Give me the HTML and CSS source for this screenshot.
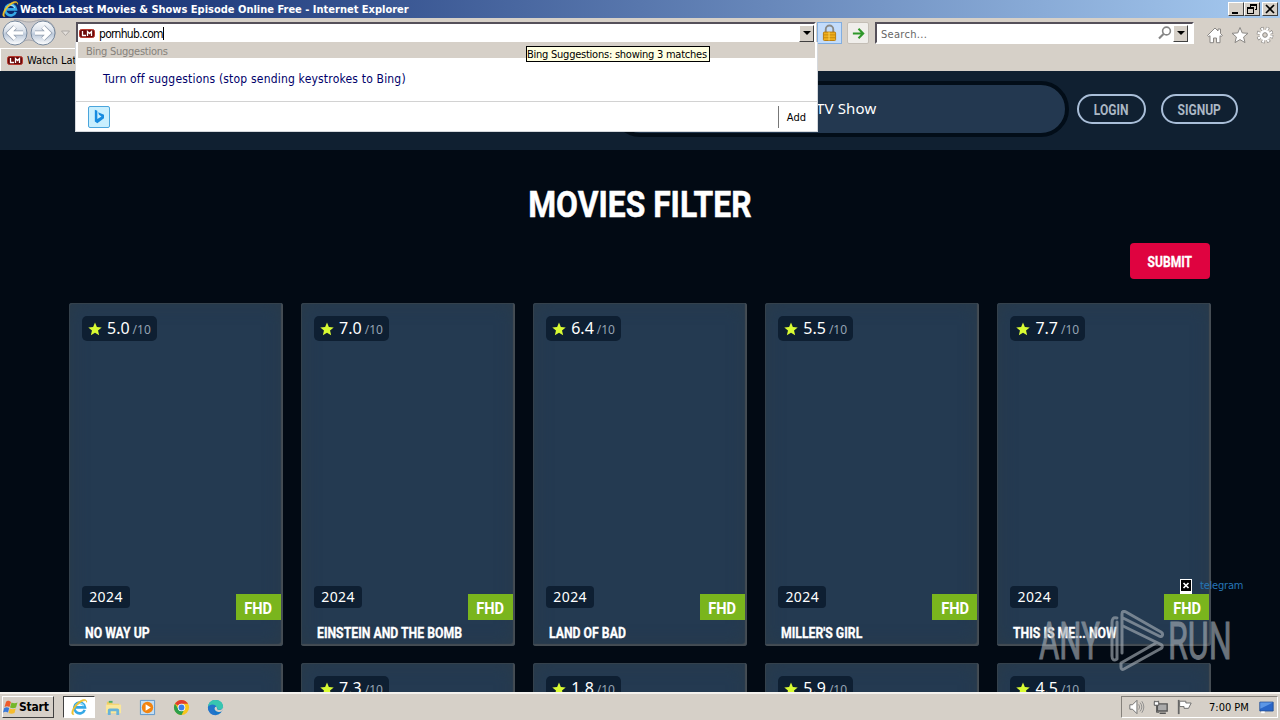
FILE: index.html
```html
<!DOCTYPE html>
<html lang="en">
<head>
  <meta charset="utf-8">
  <title>Watch Latest Movies &amp; Shows Episode Online Free</title>
  <link rel="stylesheet" href="styles.css">
</head>
<body>

  <svg class="symbols" aria-hidden="true">
    <symbol id="star" viewBox="0 0 24 24"><path d="M12 1l3.200 7.600 8.300.7-6.300 5.400 1.900 8.100L12 18.500l-7.100 4.300 1.900-8.100L.5 9.300l8.300-.7z"/></symbol>
    <symbol id="ie" viewBox="0 0 18 18">
      <path d="M14.500 11.500A5.700 5.700 0 1 1 14.800 8.800H5" fill="none" stroke="#35a8e6" stroke-width="2.800"/>
      <path d="M4.500 7.500C6 4 12 3 13.500 7.500" fill="none" stroke="#9ce2fd" stroke-width="1.200"/>
      <path d="M3 16.500C-1 17 1 10 6 5S17-1 16.500 3.500C17 0 11 2 7 6S1 15 3 16.500z" fill="#f7c92c" stroke="#e6b929" stroke-width=".7"/>
    </symbol>
    <symbol id="lm" viewBox="0 0 16 9">
      <rect x=".5" y=".5" width="15" height="8" rx="2" fill="#6c0909" stroke="#b8382d"/>
      <path d="M3.500 2v4.500H7M8.500 7V2.500l2 2 2-2V7" fill="none" stroke="#fff" stroke-width="1.300"/>
    </symbol>
  </svg>

  <div class="title-bar">
    <svg class="ie-logo"><use href="#ie"/></svg>
    <span class="window-title">Watch Latest Movies &amp; Shows Episode Online Free - Internet Explorer</span>
    <div class="window-buttons">
      <span class="win-btn"><svg viewBox="0 0 12 12"><path d="M2 9h6v2H2z"/></svg></span>
      <span class="win-btn"><svg viewBox="0 0 12 12"><path d="M4 1h7v6H9V6h1V3H5v1H4zM1 4h7v7H1zm1 2v4h5V6z" fill-rule="evenodd"/></svg></span>
      <span class="win-btn close"><svg viewBox="0 0 12 12"><path d="M2 2l8 8M10 2l-8 8" stroke="#000" stroke-width="1.700"/></svg></span>
    </div>
  </div>

  <div class="toolbar">
    <div class="nav-buttons">
      <svg class="nav-svg" viewBox="0 0 72 28">
        <defs>
          <linearGradient id="round" x1="0" y1="0" x2="0" y2="1">
            <stop offset="0" stop-color="#fff"/><stop offset=".45" stop-color="#d5dde8"/>
            <stop offset=".55" stop-color="#bcc9da"/><stop offset="1" stop-color="#fff"/>
          </linearGradient>
        </defs>
        <path d="M14 1C21 0 22 3 29 3S37 0 44 1s12 7 11 14-7 11-13 10c-6 0-7-4-13-4s-7 4-15 4" fill="#cbc9cb" stroke="#a9a8ab"/>
        <circle cx="15" cy="14" r="12" fill="url(#round)" stroke="#77899e"/>
        <circle cx="43" cy="14" r="12" fill="url(#round)" stroke="#77899e"/>
        <path d="M23 14H9m6-6l-6 6 6 6M35 14h14m-6-6l6 6-6 6" fill="none" stroke="#929eae" stroke-width="5"/>
        <path d="M23 14H9m6-6l-6 6 6 6M35 14h14m-6-6l6 6-6 6" fill="none" stroke="#fff" stroke-width="3.500"/>
        <path d="M61.500 12h8L65.500 16.500z" fill="#e4e0dc" stroke="#aca8a4"/>
      </svg>
    </div>
    <div class="address-bar">
      <svg class="favicon"><use href="#lm"/></svg>
      <span class="address">pornhub.com</span><span class="caret"></span>
      <span class="drop-btn"></span>
    </div>
    <div class="tool-btn lock">
      <svg viewBox="0 0 16 18"><path d="M4 9V5a4 4 0 0 1 8 0v4" fill="none" stroke="#8a8a86" stroke-width="2"/><rect x="1.500" y="8" width="13" height="9" rx="1" fill="#efae1d" stroke="#b77a0b"/><path d="M2 11h12M2 14h12" stroke="#c98c0d"/><path d="M7.500 8v9" stroke="#fbd863"/></svg>
    </div>
    <div class="tool-btn go">
      <svg viewBox="0 0 16 16"><path d="M2 8h11M8 3l5 5-5 5" fill="none" stroke="#2f972b" stroke-width="2.200"/></svg>
    </div>
    <div class="search-bar">
      <span class="search-text">Search...</span>
      <svg class="magnifier" viewBox="0 0 14 14"><circle cx="8.500" cy="5" r="3.900" fill="none" stroke="#858585" stroke-width="1.600"/><path d="M5.500 8L1 12.500" stroke="#858585" stroke-width="2.200"/></svg>
      <span class="drop-btn"></span>
    </div>
    <div class="command-icons">
      <svg viewBox="0 0 18 18"><path d="M1.500 9.500L9 2l3 3V3h2.500v4.500l2 2-1.500 1-1-.8v7H10.500V12h-3v4.700H4v-7l-1.200.9z" fill="#fff" stroke="#8a8784"/></svg>
      <svg viewBox="0 0 18 18"><path d="M9 1.500l2.200 5.400 5.800.4-4.400 3.700 1.400 5.600-5-3-5 3 1.400-5.600L1 7.300l5.800-.4z" fill="#fff" stroke="#8a8784"/></svg>
      <svg viewBox="0 0 18 18"><circle cx="9" cy="9" r="6.400" fill="none" stroke="#8a8784" stroke-width="4" stroke-dasharray="3 2.030"/><circle cx="9" cy="9" r="6.400" fill="none" stroke="#fff" stroke-width="2.800" stroke-dasharray="2 3.030" stroke-dashoffset="-.5"/><circle cx="9" cy="9" r="5.300" fill="#fff"/><circle cx="9" cy="9" r="2.300" fill="#d6d0c8" stroke="#8a8784"/></svg>
    </div>
  </div>

  <div class="tab-row">
    <div class="tab"><svg class="favicon"><use href="#lm"/></svg><span class="tab-title">Watch Lat</span></div>
  </div>

  <div class="suggestions">
    <div class="suggest-head"><span>Bing Suggestions</span></div>
    <div class="suggest-body"><span>Turn off suggestions (stop sending keystrokes to Bing)</span></div>
    <div class="suggest-foot">
      <span class="bing"><svg viewBox="0 0 14 18"><path d="M2 1l3 1v10l5-3-3-2-1-3 7 3v4L5 17l-3-2z" fill="#168be0"/></svg></span>
      <span class="add">Add</span>
    </div>
  </div>
  <div class="tooltip"><span>Bing Suggestions: showing 3 matches</span></div>

  <div class="page">
    <header class="site-header">
      <div class="site-search">TV Show</div>
      <a class="pill login"><span>LOGIN</span></a>
      <a class="pill signup"><span>SIGNUP</span></a>
    </header>

    <main class="content">
      <h1><span>MOVIES FILTER</span></h1>
      <div class="filter-row"><button class="submit"><span>SUBMIT</span></button></div>

      <div class="movies">
        <div class="card">
          <div class="rating"><svg><use href="#star"/></svg><b>5.0</b><small>/10</small></div>
          <div class="info"><span class="year">2024</span><span class="quality"><span>FHD</span></span></div>
          <h3><span>NO WAY UP</span></h3>
        </div>
        <div class="card">
          <div class="rating"><svg><use href="#star"/></svg><b>7.0</b><small>/10</small></div>
          <div class="info"><span class="year">2024</span><span class="quality"><span>FHD</span></span></div>
          <h3><span>EINSTEIN AND THE BOMB</span></h3>
        </div>
        <div class="card">
          <div class="rating"><svg><use href="#star"/></svg><b>6.4</b><small>/10</small></div>
          <div class="info"><span class="year">2024</span><span class="quality"><span>FHD</span></span></div>
          <h3><span>LAND OF BAD</span></h3>
        </div>
        <div class="card">
          <div class="rating"><svg><use href="#star"/></svg><b>5.5</b><small>/10</small></div>
          <div class="info"><span class="year">2024</span><span class="quality"><span>FHD</span></span></div>
          <h3><span>MILLER'S GIRL</span></h3>
        </div>
        <div class="card">
          <div class="rating"><svg><use href="#star"/></svg><b>7.7</b><small>/10</small></div>
          <div class="info"><span class="year">2024</span><span class="quality"><span>FHD</span></span></div>
          <h3><span>THIS IS ME... NOW</span></h3>
        </div>
        <div class="card"></div>
        <div class="card"><div class="rating"><svg><use href="#star"/></svg><b>7.3</b><small>/10</small></div></div>
        <div class="card"><div class="rating"><svg><use href="#star"/></svg><b>1.8</b><small>/10</small></div></div>
        <div class="card"><div class="rating"><svg><use href="#star"/></svg><b>5.9</b><small>/10</small></div></div>
        <div class="card"><div class="rating"><svg><use href="#star"/></svg><b>4.5</b><small>/10</small></div></div>
      </div>
    </main>
  </div>

  <div class="telegram">
    <svg viewBox="0 0 12 16"><path d="M0 1h12v15H0z" fill="#fff"/><path d="M1 2h10v11H1z"/><path d="M3.500 5l5 5M8.500 5l-5 5" stroke="#fff" stroke-width="1.700"/></svg>
    <a>telegram</a>
  </div>

  <div class="watermark">
    <span class="any">ANY</span>
    <svg viewBox="0 0 56 62"><g fill="none" stroke="#a3abb3" stroke-width="3" stroke-linejoin="round" stroke-linecap="round"><path d="M8 8C4 7 3 9 3 13v33c0 4 2 5 5 3V12"/><path d="M13 43V4c0-3 2-3 4-2l35 20c3 2 1 6-2 4L14 8"/><path d="M14 16l37 18c3 1 3 4 0 5L15 59c-2 1-3 0-3-2v-4l35-20"/></g></svg>
    <span class="run">RUN</span>
  </div>

  <div class="taskbar">
    <div class="start">
      <svg viewBox="0 0 16 16"><path d="M3 3c2-2 3-1 5 0L6.500 8c-2-1-3-1-5 0z" fill="#ee5b2b"/><path d="M8.500 3.500c2 1 4 1 6 0L13 8.500c-2 1-4 1-6 0z" fill="#74b72b"/><path d="M1.200 9c2-1 3-1 5 0L5 13.500c-2-1-3-1-5 0z" fill="#3979d9"/><path d="M6.700 9.500c2 1 4 1 6 0L11.500 14c-2 1-4 1-6 0z" fill="#f7bc2c"/></svg>
      <span>Start</span>
    </div>
    <div class="task active"><svg viewBox="0 0 18 18"><use href="#ie"/></svg></div>
    <div class="task"><svg viewBox="0 0 18 18"><path d="M2 3h5l1 2h7v10H2z" fill="#f0ce62"/><path d="M4 2h4v2H4z" fill="#4dae65"/><path d="M1 6h16v9H1z" fill="#fae79a"/><path d="M3 17v-5q0-2 2-2h8q2 0 2 2v5h-3v-4H6v4z" fill="#68b3d9"/></svg></div>
    <div class="task"><svg viewBox="0 0 18 18"><path d="M1.500 1.500h15v15h-15z" fill="#c4def3" stroke="#5b95cb"/><circle cx="9" cy="9" r="6" fill="#f28411"/><path d="M7 5.500l5.500 3.500L7 12.500z" fill="#fff"/></svg></div>
    <div class="task"><svg viewBox="0 0 18 18"><circle cx="9" cy="9" r="8" fill="#f8c51c"/><path d="M9 9L2.100 5A8 8 0 0 1 15.900 5H9z" fill="#e13c2f"/><path d="M2.100 5A8 8 0 0 0 9 17l3-6-5.500 1z" fill="#2c9f4b"/><circle cx="9" cy="9" r="4" fill="#fff"/><circle cx="9" cy="9" r="3.100" fill="#3c7ee8"/></svg></div>
    <div class="task"><svg viewBox="0 0 18 18"><circle cx="9" cy="9" r="8" fill="#1577c8"/><path d="M1.100 8C2 3 5 1 9 1c5 0 8 3 8 7 0 3-3 4-6 3 1-4-6-6-9.900-3z" fill="#38c6b0"/><path d="M11 11c3 1.500 6 0 6-3v3l-1 2c-3 2-8 0-8-3 0-1 1-2 2-2z" fill="#d6d0c8"/><path d="M1 9c2-4 7-4 9-1-4 0-4 6 1 9C5 18 1 14 1 9z" fill="#2374ca"/></svg></div>
    <div class="tray">
      <svg viewBox="0 0 18 18"><path d="M1.500 6.500h3l5-5v15l-5-5h-3z" fill="#fff" stroke="#666"/><path d="M11.500 6q2 3 0 6M13 4q4 5 0 10M15 2.500q4.500 6.500 0 13" fill="none" stroke="#888"/></svg>
      <svg viewBox="0 0 18 18"><path d="M5.500 5.500h11v8h-11zM8 16h7" fill="#aaa" stroke="#555" stroke-width="1.500"/><path d="M2.500 2v5h4V2M4.500 7v8h3" fill="none" stroke="#555"/><path d="M2 3h5v4H2z" fill="#fff" stroke="#555"/></svg>
      <svg viewBox="0 0 18 18"><path d="M2.500 1v16" stroke="#666" stroke-width="2"/><path d="M3.500 2.500h7v2h6l-3 6h-5v-2h-5z" fill="#fff" stroke="#666"/></svg>
      <span class="clock">7:00 PM</span>
      <svg class="desktop" viewBox="0 0 18 18"><path d="M1.500 3.500h15v10h-15z" fill="#2a66c8" stroke="#235096"/><path d="M2 4h14L2 11z" fill="#5c96e6"/><path d="M3 15h4" stroke="#fff" stroke-width="2"/></svg>
    </div>
  </div>

</body>
</html>
```
FILE: styles.css
```css
* {
  box-sizing: border-box;
}

body {
  margin: 0;
  width: 1280px;
  height: 720px;
  overflow: hidden;
  position: relative;
  display: flex;
  flex-direction: column;
  background: #020a14;
  font-family: "DejaVu Sans Condensed", "DejaVu Sans", sans-serif;
  font-stretch: condensed;
  font-size: 11px;
  color: #000;
}

svg {
  display: block;
  flex-shrink: 0;
}

.symbols {
  position: absolute;
  width: 0;
  height: 0;
}

/* browser window */
.title-bar {
  height: 18px;
  flex-shrink: 0;
  display: flex;
  align-items: center;
  padding: 0 2px;
  background: linear-gradient(to right, #0a246a, #a6caf0);
  color: #fff;
}

.ie-logo {
  width: 17px;
  height: 17px;
}

.window-title {
  font-weight: bold;
  margin-left: 1px;
  white-space: nowrap;
}

.window-buttons {
  display: flex;
  margin-left: auto;
}

.win-btn {
  width: 16px;
  height: 14px;
  background: #d6d0c8;
  border: 1px solid;
  border-color: #fff #404040 #404040 #fff;
  display: flex;
  align-items: center;
  justify-content: center;
}

.win-btn svg {
  width: 12px;
  height: 12px;
}

.close {
  margin-left: 2px;
}

.toolbar {
  height: 30px;
  flex-shrink: 0;
  display: flex;
  background: #d6d0c8;
  padding-top: 4px;
}

.nav-buttons {
  width: 76px;
  margin-top: -3px;
}

.nav-svg {
  width: 72px;
  height: 28px;
}

.address-bar {
  width: 740px;
  height: 22px;
  background: #fff;
  border: 2px solid;
  border-color: #55505a #fff #fff #55505a;
  display: flex;
  align-items: center;
}

.favicon {
  width: 16px;
  height: 9px;
}

.address-bar .favicon {
  margin-left: 1px;
}

.address {
  margin-left: 4px;
  padding-top: 2px;
  font-size: 12px;
  letter-spacing: -0.700px;
}

.caret {
  width: 1px;
  height: 13px;
  background: #000;
}

.drop-btn {
  width: 15px;
  height: 17px;
  margin-left: auto;
  background: #d6d0c8;
  border: 1px solid;
  border-color: #fff #404040 #404040 #fff;
  display: flex;
  align-items: center;
  justify-content: center;
}

.drop-btn::after {
  content: "";
  border: 4px solid transparent;
  border-top-color: #000;
  border-bottom: 0;
}

.tool-btn {
  height: 22px;
  display: flex;
  align-items: center;
  justify-content: center;
}

.lock {
  width: 25px;
  margin-left: 1px;
  background: #c3dcfb;
  border: 1px solid #82aee0;
}

.lock svg {
  width: 15px;
  height: 18px;
}

.go {
  width: 22px;
  margin-left: 5px;
  background: #f0eeeb;
  border: 1px solid #c4beb6;
  border-radius: 2px;
}

.go svg {
  width: 15px;
  height: 15px;
}

.search-bar {
  width: 319px;
  height: 22px;
  margin-left: 6px;
  padding: 0 4px;
  background: #fff;
  border: 2px solid;
  border-color: #55505a #fff #fff #55505a;
  display: flex;
  align-items: center;
  color: #666;
}

.search-text {
  padding-top: 2px;
  letter-spacing: 0.300px;
}

.magnifier {
  width: 14px;
  height: 14px;
  margin-left: auto;
}

.search-bar .drop-btn {
  margin-left: 1px;
}

.command-icons {
  display: flex;
  gap: 7px;
  margin: 4px 0 0 12px;
}

.command-icons svg {
  width: 18px;
  height: 18px;
}

.tab-row {
  height: 23px;
  flex-shrink: 0;
  background: #d6d0c8;
}

.tab {
  width: 76px;
  height: 23px;
  padding-left: 6px;
  display: flex;
  align-items: center;
  gap: 4px;
  border-top: 1px solid #fff;
  border-left: 1px solid #fff;
  white-space: nowrap;
}

/* address bar dropdown */
.suggestions {
  position: absolute;
  left: 75px;
  top: 42px;
  width: 743px;
  height: 90px;
  background: #fff;
  border: 1px solid #d5d8dc;
  border-top: 0;
  z-index: 2;
}

.suggest-head {
  height: 16px;
  margin: 0 2px;
  padding-left: 8px;
  line-height: 19px;
  background: #d6d0c8;
  color: #85817b;
  letter-spacing: -0.250px;
}

.suggest-body {
  height: 44px;
  padding-left: 27px;
  line-height: 43px;
  font-size: 12px;
  letter-spacing: 0.190px;
  color: #00006a;
  border-bottom: 1px solid #d2d2d2;
}

.suggest-foot {
  height: 29px;
  display: flex;
  align-items: center;
  padding: 0 11px 0 12px;
}

.bing {
  width: 22px;
  height: 22px;
  border: 1px solid #4aa5dc;
  border-radius: 2px;
  background: #c9effe;
  display: flex;
  align-items: center;
  justify-content: center;
}

.bing svg {
  width: 12px;
  height: 15px;
}

.add {
  height: 22px;
  margin-left: auto;
  padding-left: 8px;
  border-left: 1px solid #777;
  line-height: 23px;
}

.tooltip {
  position: absolute;
  left: 526px;
  top: 46px;
  width: 184px;
  height: 16px;
  line-height: 15px;
  letter-spacing: -0.240px;
  border: 1px solid #000;
  background: #ffffe1;
  white-space: nowrap;
  z-index: 3;
}

/* movie site */
.page {
  height: 621px;
  flex-shrink: 0;
  overflow: hidden;
  font-family: "Noto Sans", sans-serif;
  font-stretch: normal;
  color: #fff;
}

.site-header {
  height: 79px;
  background: #102031;
  display: flex;
  align-items: flex-start;
  justify-content: flex-end;
  padding: 10px 42px 0 0;
}

.site-search {
  width: 457px;
  height: 56px;
  padding-left: 200px;
  border: 4px solid #020d18;
  border-radius: 28px;
  background: #233850;
  font-size: 15px;
  letter-spacing: 0.150px;
  line-height: 47px;
}

.pill {
  height: 30px;
  margin-top: 13px;
  padding-top: 1px;
  border: 2px solid #a9bed8;
  border-radius: 15px;
  display: flex;
  align-items: center;
  justify-content: center;
  color: #abb7c4;
  font: bold 14px Roboto, sans-serif;
}

.login {
  width: 69px;
  margin-left: 8px;
}

.signup {
  width: 77px;
  margin-left: 15px;
}

.pill span,
h1 span,
h3 span,
.submit span,
.quality span {
  display: inline-block;
  transform: scaleX(0.86);
}

.content {
  padding: 0 70px 0 69px;
}

h1 {
  margin: 0;
  padding-top: 33px;
  height: 93px;
  text-align: center;
  font: bold 37px/44px Roboto, sans-serif;
  -webkit-text-stroke: 0.500px #fff;
}

.filter-row {
  display: flex;
  justify-content: flex-end;
}

.submit {
  width: 80px;
  height: 36px;
  padding: 2px 0 0;
  border: 0;
  border-radius: 4px;
  background: #df0340;
  color: #fff;
  font: bold 14px Roboto, sans-serif;
  -webkit-text-stroke: 0.300px #fff;
}

.movies {
  display: grid;
  grid-template-columns: repeat(5, 214px);
  grid-auto-rows: 343px;
  gap: 17px 18.100px;
  margin-top: 24px;
}

.card {
  display: flex;
  flex-direction: column;
  align-items: flex-start;
  padding: 13px 0 0 13px;
  border-radius: 3px;
  background: #243a51;
  box-shadow: inset -2px -2px 1px #454d54, inset 1px 1px 0 #34414c, inset 0 0 18px #2b3b48;
}

.rating {
  height: 25px;
  width: 75px;
  padding-left: 6px;
  display: flex;
  align-items: center;
  border-radius: 5px;
  background: #0e1f32;
}

.rating svg {
  width: 14px;
  height: 14px;
  fill: #d9fb33;
}

.rating b {
  margin: -2px 0 0 5px;
  font-size: 16px;
  font-weight: 400;
}

.rating small {
  margin: 1px 0 0 3px;
  font-size: 12px;
  color: #95a3b2;
}

.info {
  width: 199px;
  height: 34px;
  margin-top: auto;
  display: flex;
  align-items: flex-start;
  justify-content: space-between;
}

.year {
  width: 48px;
  height: 22px;
  border-radius: 4px;
  background: #0e1f32;
  text-align: center;
  font-size: 14px;
  letter-spacing: 0.400px;
  line-height: 21px;
}

.quality {
  width: 45px;
  height: 26px;
  margin-top: 8px;
  background: #7ab51d;
  text-align: center;
  font: bold 17px/28px Roboto, sans-serif;
}

h3 {
  margin: 4px 0 3px 3px;
  font: bold 14px/19px Roboto, sans-serif;
  white-space: nowrap;
  -webkit-text-stroke: 0.300px #fff;
}

h3 span {
  transform: scaleX(0.875);
  transform-origin: left;
}

.telegram {
  position: absolute;
  left: 1180px;
  top: 578px;
  display: flex;
  gap: 8px;
  color: #2676b7;
  letter-spacing: -0.200px;
  line-height: 15px;
}

.telegram svg {
  width: 12px;
  height: 16px;
}

.watermark {
  position: absolute;
  left: 1039px;
  top: 609px;
  height: 64px;
  display: flex;
  align-items: center;
  opacity: 0.650;
  color: #a3abb3;
  font: 52px Roboto, sans-serif;
  -webkit-text-stroke: 1px #a3abb3;
}

.watermark svg {
  width: 56px;
  height: 62px;
}

.any,
.run {
  width: 60px;
  white-space: nowrap;
  transform: scaleX(0.600);
  transform-origin: left;
}

.any {
  margin-right: 10px;
}

.run {
  margin-left: 3px;
  transform: scaleX(0.620);
}

/* windows taskbar */
.taskbar {
  height: 28px;
  flex-shrink: 0;
  display: flex;
  align-items: center;
  background: #d6d0c8;
  border-top: 2px solid #f4f2ee;
  padding: 2px;
}

.start {
  width: 52px;
  height: 22px;
  display: flex;
  align-items: center;
  border: 1px solid;
  border-color: #fff #404040 #404040 #fff;
  font-weight: bold;
  font-size: 12px;
  letter-spacing: -0.200px;
  margin-right: 9px;
}

.start svg {
  width: 16px;
  height: 16px;
}

.task {
  width: 32px;
  height: 22px;
  margin-right: 2px;
  display: flex;
  align-items: center;
  justify-content: center;
}

.task svg {
  width: 17px;
  height: 17px;
}

.active {
  background: #fff;
  border: 1px solid;
  border-color: #404040 #fff #fff #404040;
}

.tray {
  width: 157px;
  height: 22px;
  margin-left: auto;
  padding: 0 2px 0 6px;
  display: flex;
  align-items: center;
  gap: 7px;
  border: 1px solid;
  border-color: #85817b #fff #fff #85817b;
}

.tray svg {
  width: 17px;
  height: 16px;
}

.clock {
  margin-left: 9px;
  white-space: nowrap;
}

.tray .desktop {
  margin-left: auto;
}
```
